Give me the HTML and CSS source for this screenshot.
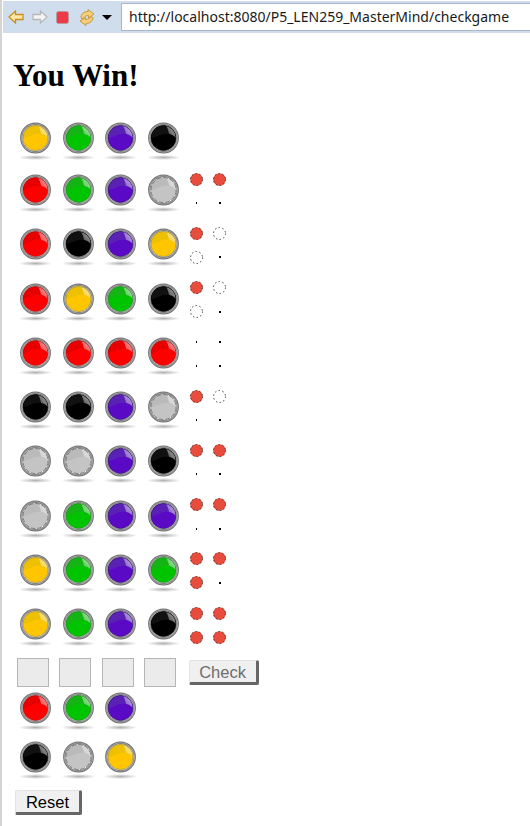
FILE: index.html
```html
<!DOCTYPE html>
<html>
<head>
  <title>checkgame</title>
  <link rel="stylesheet" href="styles.css">
</head>
<body>
  <svg class="defs" width="0" height="0">
    <defs>
      <radialGradient id="shadow">
        <stop offset="0" stop-color="#b0b0b0"/>
        <stop offset="1" stop-color="#ffffff"/>
      </radialGradient>
      <linearGradient id="glare" x1="0" y1="1" x2="1" y2="0">
        <stop offset="0" stop-color="#ffffff" stop-opacity=".15"/>
        <stop offset="1" stop-color="#ffffff" stop-opacity=".7"/>
      </linearGradient>
      <symbol id="ball" viewBox="0 0 43 40">
        <ellipse cx="21.5" cy="35.5" rx="17" ry="2.5" fill="url(#shadow)"/>
        <circle cx="21.5" cy="16" r="15.4" fill="#707070"/>
        <circle cx="21.5" cy="16" r="14.5" fill="#a8a8a8"/>
        <circle cx="21.5" cy="16" r="13.7" fill="#787878"/>
        <circle cx="21.5" cy="16" r="13.1" fill="#ffffff"/>
        <circle cx="21.5" cy="16" r="12.5" class="ball-base"/>
        <path d="M9 16a12.5 12.5 0 0 1 25 0c-3-2.5-6-4.200-10-4.200C18.500 11.800 15 15.500 9 16z" class="ball-top"/>
        <path d="M24 3.700A12.500 12.500 0 0 1 34 16c-2-2-4-3.500-7-4.200-.5-2.800-1.500-5.800-3-8.100z" fill="url(#glare)"/>
        <circle cx="21.5" cy="16" r="12.6" class="ball-rim"/>
      </symbol>
      <symbol id="peg" viewBox="0 0 13 13">
        <circle cx="6.5" cy="6.5" r="6.3" class="peg-fill"/>
        <circle cx="6.5" cy="6.5" r="6" class="peg-ring"/>
      </symbol>
    </defs>
  </svg>

  <div class="toolbar">
    <div class="toolbar-icons">
      <svg width="16" height="14" viewBox="0 0 16 14"><path d="M1 7l6.500-6v3.500h7.500v5H7.500V13z" fill="#fde6a6" stroke="#c8901e" stroke-width="1.300"/></svg>
      <svg width="16" height="14" viewBox="0 0 16 14"><path d="M15 7L8.500 1v3.500H1v5h7.500V13z" fill="#f4f4f4" stroke="#b8b8b8" stroke-width="1.300"/></svg>
      <svg width="13" height="13" viewBox="0 0 13 13"><rect x=".5" y=".5" width="12" height="12" rx="2" fill="#ee3a48" stroke="#b89aa2"/></svg>
      <svg class="refresh" width="16" height="17" viewBox="0 0 16 17"><path d="M2 9C2 5 5 2.500 9 2.500V.5L15 5 9.500 9V6.500C7 6.500 5 7.500 4.500 10z" fill="#f6cf7a" stroke="#c89a3c"/><path d="M14 8.500c0 3.500-3 6-7 6v2L1 12l5.500-3.500v2c2.500 0 4.500-1 5-3z" fill="#f6cf7a" stroke="#c89a3c"/></svg>
      <span class="toolbar-arrow"></span>
    </div>
    <div class="address">http://localhost:8080/P5_LEN259_MasterMind/checkgame</div>
  </div>

  <main class="page">
    <h1>You Win!</h1>

    <div class="row first">
      <svg class="ball yellow"><use href="#ball"/></svg>
      <svg class="ball green"><use href="#ball"/></svg>
      <svg class="ball purple"><use href="#ball"/></svg>
      <svg class="ball black"><use href="#ball"/></svg>
    </div>

    <div class="row">
      <svg class="ball red"><use href="#ball"/></svg>
      <svg class="ball green"><use href="#ball"/></svg>
      <svg class="ball purple"><use href="#ball"/></svg>
      <svg class="ball gray"><use href="#ball"/></svg>
      <div class="pegs">
        <svg class="peg hit"><use href="#peg"/></svg>
        <svg class="peg hit"><use href="#peg"/></svg>
        <i class="none"></i>
        <i class="none"></i>
      </div>
    </div>

    <div class="row">
      <svg class="ball red"><use href="#ball"/></svg>
      <svg class="ball black"><use href="#ball"/></svg>
      <svg class="ball purple"><use href="#ball"/></svg>
      <svg class="ball yellow"><use href="#ball"/></svg>
      <div class="pegs">
        <svg class="peg hit"><use href="#peg"/></svg>
        <svg class="peg"><use href="#peg"/></svg>
        <svg class="peg"><use href="#peg"/></svg>
        <i class="none"></i>
      </div>
    </div>

    <div class="row">
      <svg class="ball red"><use href="#ball"/></svg>
      <svg class="ball yellow"><use href="#ball"/></svg>
      <svg class="ball green"><use href="#ball"/></svg>
      <svg class="ball black"><use href="#ball"/></svg>
      <div class="pegs">
        <svg class="peg hit"><use href="#peg"/></svg>
        <svg class="peg"><use href="#peg"/></svg>
        <svg class="peg"><use href="#peg"/></svg>
        <i class="none"></i>
      </div>
    </div>

    <div class="row">
      <svg class="ball red"><use href="#ball"/></svg>
      <svg class="ball red"><use href="#ball"/></svg>
      <svg class="ball red"><use href="#ball"/></svg>
      <svg class="ball red"><use href="#ball"/></svg>
      <div class="pegs">
        <i class="none"></i>
        <i class="none"></i>
        <i class="none"></i>
        <i class="none"></i>
      </div>
    </div>

    <div class="row">
      <svg class="ball black"><use href="#ball"/></svg>
      <svg class="ball black"><use href="#ball"/></svg>
      <svg class="ball purple"><use href="#ball"/></svg>
      <svg class="ball gray"><use href="#ball"/></svg>
      <div class="pegs">
        <svg class="peg hit"><use href="#peg"/></svg>
        <svg class="peg"><use href="#peg"/></svg>
        <i class="none"></i>
        <i class="none"></i>
      </div>
    </div>

    <div class="row">
      <svg class="ball gray"><use href="#ball"/></svg>
      <svg class="ball gray"><use href="#ball"/></svg>
      <svg class="ball purple"><use href="#ball"/></svg>
      <svg class="ball black"><use href="#ball"/></svg>
      <div class="pegs">
        <svg class="peg hit"><use href="#peg"/></svg>
        <svg class="peg hit"><use href="#peg"/></svg>
        <i class="none"></i>
        <i class="none"></i>
      </div>
    </div>

    <div class="row">
      <svg class="ball gray"><use href="#ball"/></svg>
      <svg class="ball green"><use href="#ball"/></svg>
      <svg class="ball purple"><use href="#ball"/></svg>
      <svg class="ball purple"><use href="#ball"/></svg>
      <div class="pegs">
        <svg class="peg hit"><use href="#peg"/></svg>
        <svg class="peg hit"><use href="#peg"/></svg>
        <i class="none"></i>
        <i class="none"></i>
      </div>
    </div>

    <div class="row">
      <svg class="ball yellow"><use href="#ball"/></svg>
      <svg class="ball green"><use href="#ball"/></svg>
      <svg class="ball purple"><use href="#ball"/></svg>
      <svg class="ball green"><use href="#ball"/></svg>
      <div class="pegs">
        <svg class="peg hit"><use href="#peg"/></svg>
        <svg class="peg hit"><use href="#peg"/></svg>
        <svg class="peg hit"><use href="#peg"/></svg>
        <i class="none"></i>
      </div>
    </div>

    <div class="row">
      <svg class="ball yellow"><use href="#ball"/></svg>
      <svg class="ball green"><use href="#ball"/></svg>
      <svg class="ball purple"><use href="#ball"/></svg>
      <svg class="ball black"><use href="#ball"/></svg>
      <div class="pegs">
        <svg class="peg hit"><use href="#peg"/></svg>
        <svg class="peg hit"><use href="#peg"/></svg>
        <svg class="peg hit"><use href="#peg"/></svg>
        <svg class="peg hit"><use href="#peg"/></svg>
      </div>
    </div>

    <form class="guess">
      <input class="slot" type="text" disabled>
      <input class="slot" type="text" disabled>
      <input class="slot" type="text" disabled>
      <input class="slot" type="text" disabled>
      <button class="btn check" type="button" disabled>Check</button>
    </form>

    <div class="palette">
      <svg class="ball red"><use href="#ball"/></svg>
      <svg class="ball green"><use href="#ball"/></svg>
      <svg class="ball purple"><use href="#ball"/></svg>
    </div>
    <div class="palette">
      <svg class="ball black"><use href="#ball"/></svg>
      <svg class="ball gray"><use href="#ball"/></svg>
      <svg class="ball yellow"><use href="#ball"/></svg>
    </div>

    <button class="btn reset" type="button">Reset</button>
  </main>
</body>
</html>
```

FILE: styles.css
```css
html, body {
  margin: 0;
  background: #fff;
}

body {
  height: 826px;
  overflow: hidden;
  box-sizing: border-box;
  padding-top: 1px;
  border-left: 2px solid #d4d4d4;
}

.defs {
  display: block;
  height: 0;
}

/* browser toolbar */
.toolbar {
  display: flex;
  align-items: center;
  height: 32px;
  margin-left: 1px;
  background: #cfdded;
}

.toolbar-icons {
  display: flex;
  align-items: center;
  width: 118px;
  padding-left: 5px;
  box-sizing: border-box;
  gap: 8px;
}

.refresh {
  margin-left: 2px;
}

.toolbar-arrow {
  width: 0;
  height: 0;
  margin-left: -1px;
  border-left: 5px solid transparent;
  border-right: 5px solid transparent;
  border-top: 5px solid #000;
}

.address {
  flex: 1;
  height: 28px;
  line-height: 26px;
  box-sizing: border-box;
  padding-left: 7px;
  background: #fff;
  border: 1px solid #a9b5c8;
  border-right: 0;
  font-family: "Noto Sans", sans-serif;
  font-size: 14px;
  color: #1a1a1a;
  white-space: nowrap;
}

/* page content */
.page {
  padding-left: 12px;
}

h1 {
  margin: 24px 0 28px -1px;
  font-family: "Liberation Serif", serif;
  font-size: 31px;
  line-height: 37px;
  font-weight: bold;
  color: #000;
}

.row {
  display: flex;
  height: 54.25px;
}

.row.first {
  height: 52px;
}

.palette {
  display: flex;
  height: 49px;
}

.ball {
  width: 43px;
  height: 40px;
  flex: none;
  margin-right: -.3px;
}

.ball-base { fill: var(--base); }
.ball-top { fill: var(--top); }
.ball-rim {
  fill: none;
  stroke: var(--rim);
  stroke-width: .7;
  stroke-dasharray: var(--dash, none);
}

.yellow { --base: #ffc600; --top: #edc000; --rim: #a08a30; }
.green { --base: #00c400; --top: #14b414; --rim: #2a7a2a; }
.purple { --base: #5a0ac4; --top: #5a22b4; --rim: #2a1060; }
.red { --base: #ff0000; --top: #e80000; --rim: #902020; }
.black { --base: #000; --top: #111; --rim: #000; }
.gray { --base: #c4c4c4; --top: #bababa; --rim: #555; --dash: 5 1.5; }

.pegs {
  display: grid;
  grid-template-columns: 23px 23px;
  grid-auto-rows: 24px;
  margin: -7px 0 0 .4px;
  height: 48px;
  place-items: center;
}

.peg {
  display: block;
  width: 13px;
  height: 13px;
}

.peg-fill {
  fill: var(--fill, none);
}

.peg-ring {
  fill: none;
  stroke: #333;
  stroke-width: .9;
  stroke-dasharray: 1.5 2.3;
}

.hit {
  --fill: #e74c3c;
}

.none {
  display: block;
  width: 2px;
  height: 2px;
  background: #000;
}

.none:nth-child(odd) {
  width: 1px;
}

.guess {
  display: flex;
  align-items: center;
  gap: 10.4px;
  height: 29px;
  margin: -4px 0 5px;
  padding-left: 3px;
}

.slot {
  width: 32px;
  height: 29px;
  box-sizing: border-box;
  padding: 0;
  background: #ebebeb;
  border: 1px solid #b5b5b5;
}

.btn {
  box-sizing: border-box;
  height: 25px;
  padding: 0;
  background: #f0f0f0;
  border: 1px solid #e4e4e4;
  border-right: 3px solid #666;
  border-bottom: 3px solid #666;
  border-radius: 2px;
  font-family: "Liberation Sans", sans-serif;
  font-size: 16.5px;
  line-height: 20px;
}

.check {
  width: 70px;
  margin-left: 2px;
  color: #6d6d6d;
}

.reset {
  display: block;
  width: 67px;
  margin: 0 0 0 1px;
  color: #000;
}
```
